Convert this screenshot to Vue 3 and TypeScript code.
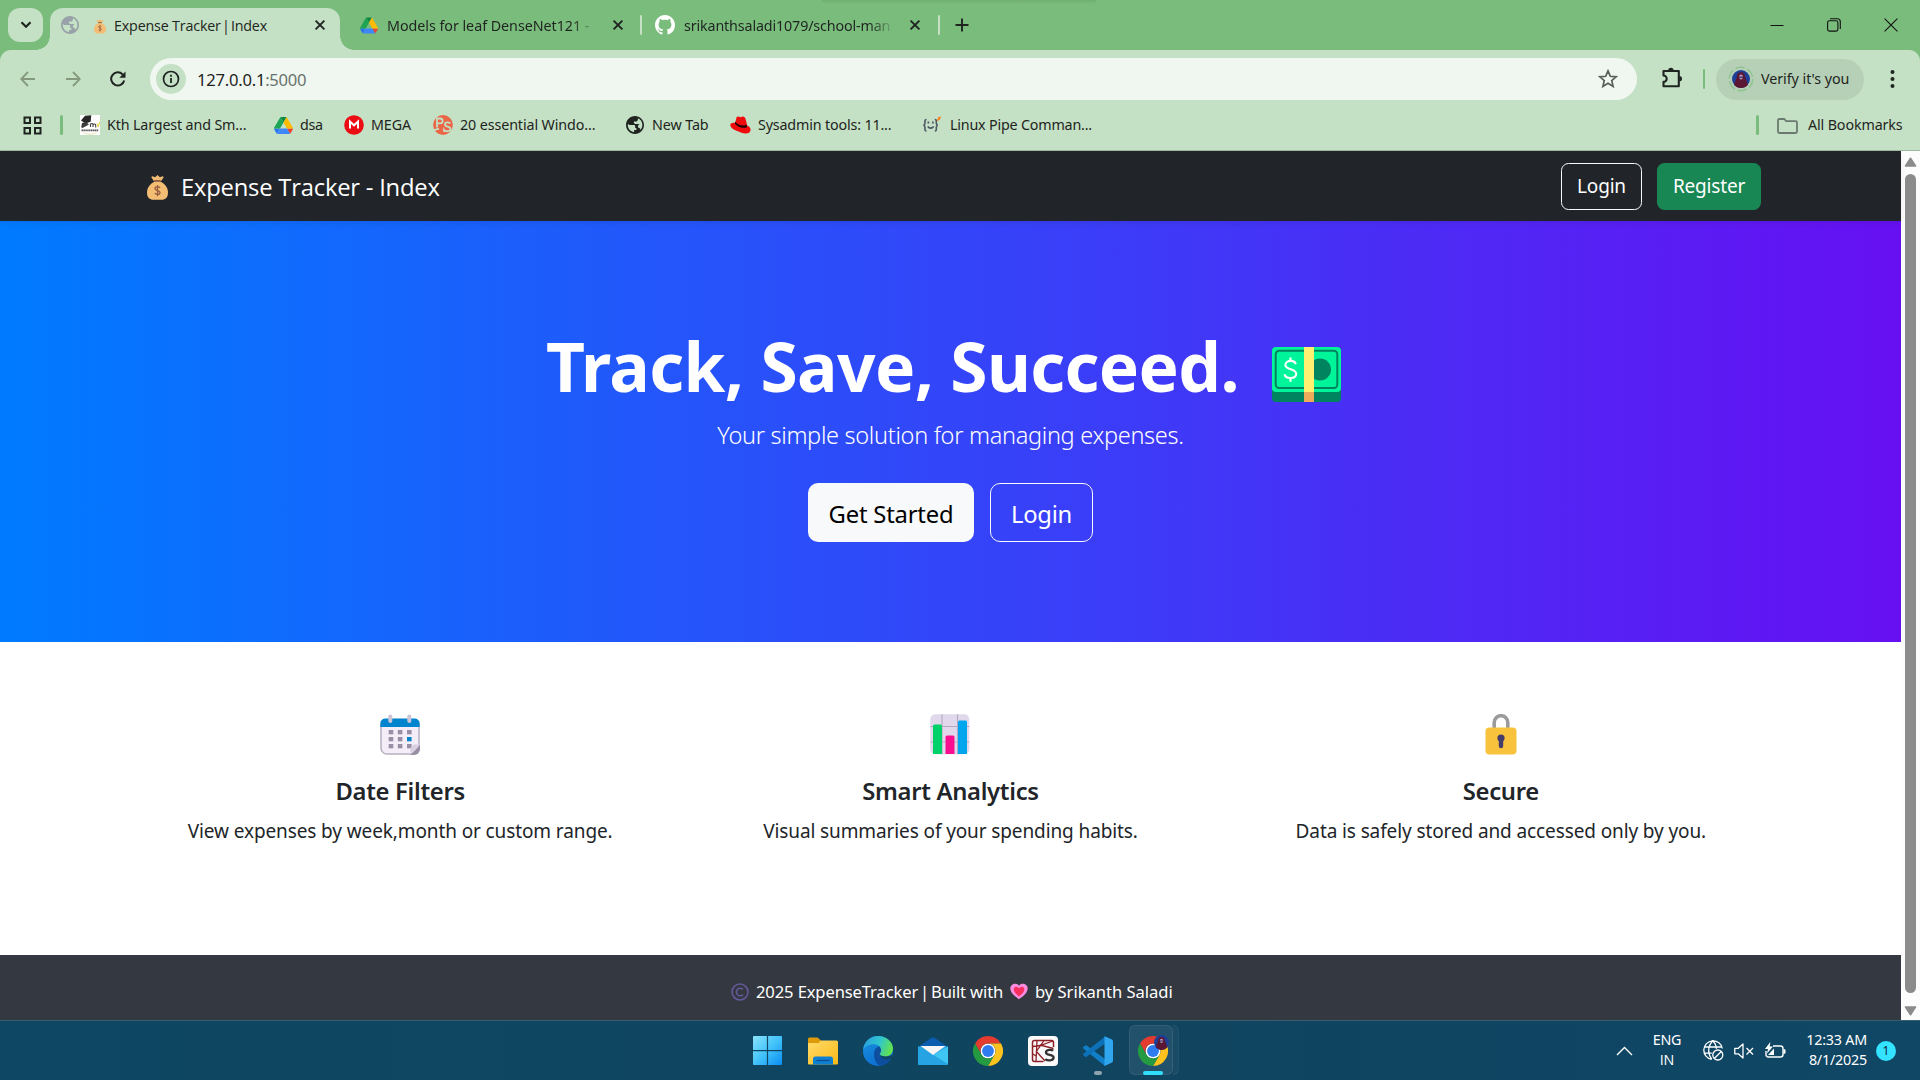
<script setup lang="ts">
interface Bookmark {
  icon: string
  label: string
  width: number
  spacing: number
}

interface Feature {
  icon: string
  title: string
  text: string
}

const bookmarks: Bookmark[] = [
  { icon: 'gate', label: 'Kth Largest and Sm...', width: 193, spacing: -0.15 },
  { icon: 'drive', label: 'dsa', width: 71, spacing: -0.3 },
  { icon: 'mega', label: 'MEGA', width: 89, spacing: -0.1 },
  { icon: 'ps', label: '20 essential Windo...', width: 192, spacing: -0.11 },
  { icon: 'globe', label: 'New Tab', width: 105, spacing: -0.1 },
  { icon: 'hat', label: 'Sysadmin tools: 11...', width: 192, spacing: -0.16 },
  { icon: 'braces', label: 'Linux Pipe Comman...', width: 175, spacing: -0.19 },
]

const features: Feature[] = [
  { icon: 'calendar', title: 'Date Filters', text: 'View expenses by week,month or custom range.' },
  { icon: 'chart', title: 'Smart Analytics', text: 'Visual summaries of your spending habits.' },
  { icon: 'lock', title: 'Secure', text: 'Data is safely stored and accessed only by you.' },
]
</script>

<template>
  <div class="screen">
    <!-- Shared symbols -->
    <svg class="defs" width="0" height="0" aria-hidden="true">
      <defs>
        <linearGradient id="win" x1="0" y1="0" x2="1" y2="1">
          <stop offset="0" stop-color="#8be3fb" /><stop offset=".5" stop-color="#43c3fa" /><stop offset="1" stop-color="#0a8df3" />
        </linearGradient>
        <linearGradient id="fold" x1="0" y1="0" x2="1" y2="1">
          <stop offset="0" stop-color="#ffdb6b" /><stop offset="1" stop-color="#fbb916" />
        </linearGradient>
        <linearGradient id="edgeTop" x1="0" y1=".3" x2="1" y2=".6">
          <stop offset="0" stop-color="#2a9fdc" /><stop offset=".5" stop-color="#2fc5cf" /><stop offset="1" stop-color="#66e445" />
        </linearGradient>
        <linearGradient id="edgeLow" x1="0" y1="0" x2=".6" y2="1">
          <stop offset="0" stop-color="#1a94e0" /><stop offset="1" stop-color="#0a6cd0" />
        </linearGradient>
      </defs>
      <symbol id="i-bag" viewBox="0 0 21 25">
        <path d="M5.500 1.200l2.600 1L10.500 0l2.400 2.200 2.600-1 1.300.8-2.600 4H6.800l-2.600-4z" fill="#f0bb73" />
        <path d="M7.200 5h6.600v2.300H7.200z" fill="#8a5a45" />
        <path d="M7.500 6.800h6c4.300 2 7.500 6 7.500 10.700 0 4.800-2.500 7.300-6.500 7.300h-8C2.500 24.800 0 22.300 0 17.500c0-4.700 3.200-8.700 7.500-10.700z" fill="#f3bd74" />
        <path d="M13 12.900c-.4-.9-1.300-1.300-2.500-1.300-1.600 0-2.500.8-2.500 1.900 0 2.700 5 1.400 5 4 0 1.200-1 2-2.500 2-1.300 0-2.200-.5-2.600-1.400M10.500 10.200v11" fill="none" stroke="#935c3e" stroke-width="1.300" />
      </symbol>
      <symbol id="i-drive" viewBox="0 0 87.3 78">
        <path d="m6.600 66.850 3.850 6.650c.8 1.400 1.950 2.500 3.300 3.300l13.750-23.800h-27.500c0 1.550.4 3.100 1.200 4.500z" fill="#2a73f0" />
        <path d="m43.650 25-13.750-23.800c-1.350.8-2.500 1.900-3.300 3.300l-25.400 44a9.060 9.060 0 0 0-1.200 4.500h27.500z" fill="#1ea455" />
        <path d="m73.550 76.800c1.350-.8 2.500-1.900 3.300-3.300l1.600-2.750 7.650-13.250c.8-1.400 1.200-2.950 1.200-4.500h-27.502l5.852 11.500z" fill="#ea4335" />
        <path d="m43.650 25 13.750-23.800c-1.350-.8-2.900-1.200-4.500-1.200h-18.500c-1.600 0-3.150.45-4.500 1.200z" fill="#118640" />
        <path d="m59.800 53h-32.300l-13.750 23.800c1.350.8 2.900 1.200 4.500 1.200h50.800c1.600 0 3.150-.45 4.500-1.200z" fill="#3f86f8" />
        <path d="m73.400 26.500-12.700-22c-.8-1.400-1.950-2.500-3.300-3.300l-13.750 23.800 16.150 28h27.450c0-1.550-.4-3.100-1.200-4.500z" fill="#fdbb05" />
      </symbol>
      <symbol id="i-globe" viewBox="2 2 20 20">
        <path d="M12 2C6.480 2 2 6.480 2 12s4.480 10 10 10 10-4.480 10-10S17.520 2 12 2zm-1 17.930c-3.950-.49-7-3.850-7-7.930 0-.4.100-.9.210-1.100L6 12h4.500c1.500 0 1.700.6 1.700 1.600v1.600h1.300v2.300H11v2.430zM17.900 17.390c-.5-.7-.2-1.600-1-2l-1.500-.5v-2.200l1.600-1.700h-5l-1.200-1.200V8.200h3l1.400-1.800V4.590c2.930 1.190 5 4.060 5 7.410 0 2.080-.8 3.970-2.300 5.390z" fill="currentColor" />
      </symbol>
      <symbol id="i-x" viewBox="0 0 12 12"><path d="M1.600 1.600l8.800 8.800M10.400 1.600l-8.800 8.800" stroke="#1f2421" stroke-width="1.900" /></symbol>
      <symbol id="i-chrome" viewBox="0 0 48 48">
        <circle cx="24" cy="24" r="12" fill="#fff" />
        <path d="M24 12h20.781a23.994 23.994 0 0 0-41.564.003L13.608 30l.009-.002A11.985 11.985 0 0 1 24 12z" fill="#e33b2e" />
        <path d="M34.391 30.003 24.001 48A23.994 23.994 0 0 0 44.780 12.003H23.999l-.003.009a11.985 11.985 0 0 1 10.395 17.991z" fill="#fcc31e" />
        <path d="M13.609 30.003 3.218 12.006A23.994 23.994 0 0 0 24.003 48l10.390-17.997-.007-.007a11.985 11.985 0 0 1-20.777.007z" fill="#249a41" />
        <circle cx="24" cy="24" r="9.500" fill="#2f7bf0" />
      </symbol>
      <symbol id="i-avatar" viewBox="0 0 20 20">
        <circle cx="10" cy="10" r="10" fill="#1f3f97" />
        <path d="M10 2.500c-3.200 0-4.600 2.300-4.600 5.200L2.300 16.400A10 10 0 0 0 10 20a10 10 0 0 0 7.700-3.600l-3.100-8.700c0-2.900-1.400-5.200-4.600-5.200z" fill="#5c1733" />
        <path d="M10 5c-1.500 0-2.200 1.200-2.200 2.600s.9 3 2.200 3 2.200-1.600 2.200-3S11.500 5 10 5z" fill="#b494ba" />
        <path d="M7.500 8h5" stroke="#27234d" stroke-width="1.200" />
      </symbol>
    </svg>

    <!-- Tab strip -->
    <header class="tabs">
      <div class="tab-search">
        <svg width="12" height="8" viewBox="0 0 12 8"><path d="M1.500 1.300L6 5.800l4.500-4.500" fill="none" stroke="#1f2421" stroke-width="2.200" /></svg>
      </div>
      <div class="tab active">
        <svg class="fav-globe" width="18" height="18"><use href="#i-globe" /></svg>
        <svg class="fav-bag" width="12" height="15"><use href="#i-bag" /></svg>
        <span class="tab-title tight">Expense Tracker <span class="pipe">|</span> Index</span>
        <svg class="x" width="12" height="12"><use href="#i-x" /></svg>
      </div>
      <div class="tab second">
        <svg class="fav-drive" width="18" height="17"><use href="#i-drive" /></svg>
        <span class="tab-title fade">Models for leaf DenseNet121 - </span>
        <svg class="x" width="12" height="12"><use href="#i-x" /></svg>
      </div>
      <i class="tab-sep"></i>
      <div class="tab third">
        <svg width="20" height="20" viewBox="0 0 16 16"><path fill="#fff" d="M8 0C3.580 0 0 3.580 0 8c0 3.540 2.290 6.530 5.470 7.590.4.070.55-.17.55-.38 0-.19-.01-.82-.01-1.490-2.010.37-2.530-.49-2.690-.94-.09-.23-.48-.94-.82-1.130-.28-.15-.68-.52-.01-.53.63-.01 1.080.58 1.230.82.72 1.210 1.870.87 2.330.66.07-.52.28-.87.51-1.070-1.780-.2-3.640-.89-3.640-3.950 0-.87.31-1.590.82-2.150-.08-.2-.36-1.020.08-2.120 0 0 .67-.21 2.200.82.64-.18 1.320-.27 2-.27s1.360.09 2 .27c1.530-1.040 2.200-.82 2.200-.82.44 1.100.16 1.920.08 2.120.51.56.82 1.270.82 2.150 0 3.070-1.870 3.750-3.650 3.950.29.25.54.73.54 1.480 0 1.070-.01 1.930-.01 2.200 0 .21.15.46.55.38A8.010 8.010 0 0 0 16 8c0-4.420-3.580-8-8-8" /></svg>
        <span class="tab-title fade">srikanthsaladi1079/school-man</span>
        <svg class="x" width="12" height="12"><use href="#i-x" /></svg>
      </div>
      <i class="tab-sep"></i>
      <svg class="plus" width="14" height="14" viewBox="0 0 14 14"><path d="M7 .5v13M.5 7h13" stroke="#1f2421" stroke-width="1.900" /></svg>
      <div class="window-controls">
        <svg width="14" height="14" viewBox="0 0 14 14"><path d="M.5 7.500h13" stroke="#111" /></svg>
        <svg width="14" height="14" viewBox="0 0 14 14" fill="none" stroke="#111"><rect x=".6" y="2.800" width="10.300" height="10.300" rx="1.800" stroke-width="1.100" /><path d="M3 .7h7.300a3 3 0 0 1 3 3V11" stroke-width="1.100" /></svg>
        <svg width="14" height="14" viewBox="0 0 14 14"><path d="M.6.600l12.800 12.800M13.400.600L.6 13.400" stroke="#111" stroke-width="1.100" /></svg>
      </div>
      <div class="top-shadow"></div>
    </header>

    <!-- Toolbar and bookmarks -->
    <div class="toolbar-bg">
      <div class="toolbar">
        <svg class="back" width="16" height="16" viewBox="0 0 16 16" fill="none" stroke="#85997f" stroke-width="1.800"><path d="M15 8H1.500M8 1L1.200 8 8 15" /></svg>
        <svg class="fwd" width="16" height="16" viewBox="0 0 16 16" fill="none" stroke="#85997f" stroke-width="1.800"><path d="M1 8h13.500M8 1l6.800 7L8 15" /></svg>
        <svg class="reload" width="16" height="16" viewBox="0 0 16 16"><path d="M14.200 9.500A6.600 6.600 0 1 1 12.600 3.400L14.500 5.400" fill="none" stroke="#1f2421" stroke-width="2" /><path d="M15.500.5v6.200H9.300z" fill="#1f2421" /></svg>
        <div class="address">
          <span class="site-info">
            <svg width="18" height="18" viewBox="0 0 18 18"><circle cx="9" cy="9" r="7.500" fill="none" stroke="#1f2421" stroke-width="1.700" /><path d="M9 8v5M9 4.800v1.900" stroke="#1f2421" stroke-width="1.800" /></svg>
          </span>
          <span class="url">127.0.0.1<span class="port">:5000</span></span>
          <svg class="star" width="20" height="20" viewBox="0 0 20 20"><path d="M10 1.900l2.300 5.400 5.900.5-4.450 3.850 1.350 5.750L10 14.300l-5.100 3.100 1.350-5.750L1.800 7.800l5.900-.5z" fill="none" stroke="#55605a" stroke-width="1.700" /></svg>
        </div>
        <svg class="puzzle" width="22" height="22" viewBox="0 0 22 22"><path d="M2.500 4h15.300v15.300H2.500v-4.400a3.200 3.200 0 0 0 0-6.400z" fill="none" stroke="#1f2421" stroke-width="2.100" stroke-linejoin="round" /><path d="M7.200 3.500a2.700 2.700 0 0 1 5.400 0zM18.300 9a2.700 2.700 0 0 1 0 5.400z" fill="#1f2421" /></svg>
        <i class="bar-sep thin"></i>
        <div class="profile">
          <span class="ring"><svg width="18" height="18"><use href="#i-avatar" /></svg>
            <svg class="dash" width="26" height="26" viewBox="0 0 26 26"><circle cx="13" cy="13" r="11.700" fill="none" stroke="#92c393" stroke-width="1.500" stroke-dasharray="9.500 2.750" /></svg>
          </span>
          <span class="small">Verify it's you</span>
        </div>
        <svg class="dots" width="5" height="20" viewBox="0 0 5 20" fill="#1f2421"><circle cx="2.500" cy="3" r="2" /><circle cx="2.500" cy="10" r="2" /><circle cx="2.500" cy="17" r="2" /></svg>
      </div>
      <div class="bookmarks">
        <svg class="apps" width="19" height="19" viewBox="0 0 19 19" fill="none" stroke="#1f2421" stroke-width="2"><rect x="1.500" y="1.500" width="5.500" height="5.500" /><rect x="12" y="1.500" width="5.500" height="5.500" /><rect x="1.500" y="12" width="5.500" height="5.500" /><rect x="12" y="12" width="5.500" height="5.500" /></svg>
        <i class="bar-sep"></i>
        <div v-for="b in bookmarks" :key="b.label" class="bookmark" :style="{ width: b.width + 'px' }">
          <svg v-if="b.icon === 'gate'" width="20" height="20" viewBox="0 0 20 20"><rect width="20" height="20" fill="#fff" /><path d="M1 5.500L5 .8l6.300-.6-.7 6.500L5.500 8.500z" fill="#272727" /><path d="M2 8l4-1 3 2.500L2.500 13l-1.300-.8z" fill="#3c3c3c" /><path d="M10.500 12V8.500m0 1c1-1.400 2.500-1.400 2.500.5v2m0-2c1-1.400 2.700-1.400 2.700.5v2" fill="none" stroke="#444" stroke-width="1.100" /><path d="M17 8.500l1.200 3.500 1.500-5" fill="none" stroke="#e3cd3c" /><path d="M1.500 15.300h17" stroke="#555" stroke-width="1.800" stroke-dasharray="1.500 .4" /><path d="M3.500 17.800c4 1.900 9 1.900 13 0" fill="none" stroke="#e9d9a0" stroke-width=".8" /></svg>
          <svg v-else-if="b.icon === 'drive'" class="shift" width="19" height="17"><use href="#i-drive" /></svg>
          <svg v-else-if="b.icon === 'mega'" width="20" height="20" viewBox="0 0 20 20"><circle cx="10" cy="10" r="9.800" fill="#ec0c14" /><path d="M6 13.500v-7l4 3.800 4-3.800v7" fill="none" stroke="#fff" stroke-width="2" /></svg>
          <svg v-else-if="b.icon === 'ps'" width="20" height="20" viewBox="0 0 20 20"><circle cx="10" cy="10" r="9.900" fill="#ea6647" /><g fill="none" stroke="#c4e1c5" stroke-width="1.800"><path d="M4 12.500V3.500h3.200a2.400 2.400 0 0 1 0 4.800H4" /><path d="M17.300 8.500c-.7-1.400-5.300-1.700-5.300.9 0 2.700 5.600 1.700 5.600 4.600 0 2.900-5.400 2.700-6.500.9L11.100 17M0 15.500l6-1.800" /></g></svg>
          <svg v-else-if="b.icon === 'globe'" class="dark" width="18" height="18"><use href="#i-globe" /></svg>
          <svg v-else-if="b.icon === 'hat'" width="21" height="19" viewBox="0 0 21 19"><path d="M5.200 7L6.500 1.400C7 .4 8 .3 9 .8c1 .5 2 .4 3-.1 1.500-.6 3.200.6 3.600 2.200l1.600 6.500c2 .9 3.600 2.300 3.400 4.600-.4 3.800-5.300 4.200-9.700 2.500C6 14.800.4 12.500.3 9 .3 6.900 3 6.400 5.200 7z" fill="#f00c0c" /><path d="M4.800 7.300c2 3.500 8 5.500 12.200 3.900l-.4-2.400c-3.400 1.700-9.500.2-11.300-3.400z" fill="#1c0505" /></svg>
          <svg v-else width="21" height="20" viewBox="0 0 21 20"><g fill="none" stroke="#4b5666" stroke-width="1.600"><path d="M4.500 4.500C2.500 4.500 3 6 3 8c0 1.500-.6 2-1.600 2.200 1 .2 1.600.7 1.600 2.200 0 2-.4 3.600 1.500 3.600M12.800 4.500c2 0 1.500 1.500 1.500 3.500 0 1.500.4 2 1.400 2.200-1 .2-1.400.7-1.400 2.200 0 2 .4 3.600-1.500 3.600M5.800 11.300c1.200 2.400 4.600 2.400 5.800 0" /></g><path d="M5.500 6.500h1.700v2H5.500zM10 6.500h1.700v2H10z" fill="#4b5666" /><path d="M14.500 6.500l2-4.500 2.500-.5-1 3z" fill="#fa7f16" /></svg>
          <span class="small" :style="{ letterSpacing: b.spacing + 'px' }">{{ b.label }}</span>
        </div>
        <div class="all-bookmarks">
          <i class="bar-sep"></i>
          <svg width="21" height="16" viewBox="0 0 21 16"><path d="M1 2.500C1 1.600 1.500 1 2.400 1h4.800l2 2.200h9.400c.8 0 1.400.6 1.400 1.400v8.900c0 .9-.6 1.500-1.400 1.500H2.400c-.9 0-1.400-.6-1.400-1.500z" fill="none" stroke="#6b7a70" stroke-width="1.800" /></svg>
          <span class="small">All Bookmarks</span>
        </div>
      </div>
    </div>

    <!-- Web page -->
    <div class="viewport">
      <div class="page">
        <nav class="navbar">
          <svg width="21" height="25"><use href="#i-bag" /></svg>
          <span class="brand">Expense Tracker - Index</span>
          <button class="btn outline">Login</button>
          <button class="btn success">Register</button>
        </nav>

        <section class="hero">
          <div class="headline">
            <h1>Track, Save, Succeed.</h1>
            <svg width="69" height="55" viewBox="0 0 69 55">
              <rect width="69" height="55" rx="4" fill="#00835f" />
              <rect width="69" height="45" rx="4" fill="#00f59b" />
              <rect x="3.700" y="3.700" width="61.600" height="37.300" rx="3.500" fill="none" stroke="#00835f" stroke-width="2" />
              <circle cx="48" cy="22.500" r="11" fill="#00835f" />
              <rect x="32" width="10" height="45" fill="#fff071" />
              <rect x="32" y="45" width="10" height="10" fill="#f0ab5a" />
              <path d="M23.800 17.300c-.6-2.200-2.500-3.400-5.200-3.400-3 0-5.200 1.600-5.200 4 0 5.200 10.800 3.400 10.800 8.900 0 2.600-2.400 4.200-5.700 4.200-3.200 0-5.400-1.400-5.900-3.800M18.500 10.500v3.500M18.500 31v3.700" fill="none" stroke="#fff" stroke-width="2.100" />
            </svg>
          </div>
          <p class="lead">Your simple solution for managing expenses.</p>
          <div class="cta">
            <button class="btn big light">Get Started</button>
            <button class="btn big outline">Login</button>
          </div>
        </section>

        <section class="features">
          <article v-for="f in features" :key="f.title">
            <svg v-if="f.icon === 'calendar'" width="40" height="41" viewBox="0 0 40 41">
              <rect x="1" y="6" width="38" height="34" rx="6" fill="#f3eef8" stroke="#b8b0c2" stroke-width="1.500" />
              <path d="M.3 13V9.500a5 5 0 0 1 5-5h29.400a5 5 0 0 1 5 5V13z" fill="#0084ce" />
              <rect x="8.300" y=".5" width="4" height="8.500" rx="2" fill="#cdc4d6" /><rect x="27.300" y=".5" width="4" height="8.500" rx="2" fill="#cdc4d6" />
              <g fill="#998ea4"><rect x="8.700" y="16" width="4.600" height="4.300" /><rect x="17.800" y="16" width="4.600" height="4.300" /><rect x="27" y="16" width="4.600" height="4.300" /><rect x="8.700" y="23" width="4.600" height="4.300" /><rect x="17.800" y="23" width="4.600" height="4.300" /><rect x="8.700" y="30" width="4.600" height="4.300" /><rect x="17.800" y="30" width="4.600" height="4.300" /><rect x="27" y="30" width="4.600" height="4.300" /></g>
              <rect x="27" y="23" width="4.600" height="4.300" fill="#0084ce" />
              <path d="M40 30.500h-4.500a5 5 0 0 0-5 5V40z" fill="#d9cfe2" /><path d="M40 31v4a6 6 0 0 1-6 6h-3.700z" fill="#998ea4" />
            </svg>
            <svg v-else-if="f.icon === 'chart'" width="40" height="41" viewBox="0 0 40 41">
              <rect x=".3" y=".3" width="39" height="40" rx="5" fill="#e1d8ec" />
              <path d="M12 .3v40M27.500.3v40M.3 12.500h39M.3 28h39" stroke="#b5aabf" stroke-width="1.100" />
              <path d="M3 40V12a1.500 1.500 0 0 1 1.500-1.500h6A1.500 1.500 0 0 1 12 12v28z" fill="#00d26a" />
              <path d="M15.500 40V23a1.500 1.500 0 0 1 1.500-1.500h6a1.500 1.500 0 0 1 1.500 1.500v17z" fill="#fb0d8f" />
              <path d="M28 40V8a1.500 1.500 0 0 1 1.500-1.500h6A1.500 1.500 0 0 1 37 8v32z" fill="#00a6ed" />
            </svg>
            <svg v-else width="40" height="41" viewBox="0 0 40 41">
              <path d="M13.200 15V8.500a6.800 6.800 0 0 1 13.600 0V15" fill="none" stroke="#9b9b9b" stroke-width="3.600" />
              <rect x="4.500" y="13.500" width="31" height="27" rx="4" fill="#f9c23c" />
              <circle cx="20" cy="24" r="3.600" fill="#433b6b" /><path d="M20 25v7" stroke="#433b6b" stroke-width="4.400" stroke-linecap="round" />
            </svg>
            <h2>{{ f.title }}</h2>
            <p>{{ f.text }}</p>
          </article>
        </section>

        <footer class="foot">
          <svg class="copy" width="18" height="18" viewBox="0 0 18 18" fill="none" stroke="#65589a" stroke-width="1.600"><circle cx="9" cy="9" r="8" /><path d="M12 6.400A3.800 3.800 0 1 0 12 11.600" /></svg>
          <span class="foot-a">2025 ExpenseTracker <span class="pipe">|</span> Built with</span>
          <svg class="heart" width="18" height="17" viewBox="0 0 18 17"><path d="M9 16.300C6 14 .3 10.500.3 5.300.3 1 6.500-1 9 2.800 11.500-1 17.700 1 17.700 5.300 17.700 10.500 12 14 9 16.300z" fill="#fa8de0" /><path d="M9 13.400c-2-1.500-5.300-4.200-5.300-7.200C3.700 3.400 7.300 2.800 9 5.500c1.700-2.700 5.300-2.100 5.300.7 0 3-3.300 5.700-5.300 7.200z" fill="#f92f60" /></svg>
          <span class="foot-b">by Srikanth Saladi</span>
        </footer>
      </div>
      <div class="scrollbar">
        <svg width="13" height="10" viewBox="0 0 13 10"><path d="M6.500 1.300L11.500 9h-10z" fill="#8b8b8b" stroke="#8b8b8b" stroke-width="1.600" stroke-linejoin="round" /></svg>
        <div class="thumb"></div>
        <svg width="13" height="10" viewBox="0 0 13 10"><path d="M6.500 8.700L11.500 1h-10z" fill="#8b8b8b" stroke="#8b8b8b" stroke-width="1.600" stroke-linejoin="round" /></svg>
      </div>
    </div>

    <!-- Taskbar -->
    <div class="taskbar">
      <div class="apps-row">
        <span class="app"><svg width="29" height="29" viewBox="0 0 29 29" fill="url(#win)"><path d="M1 0h12.900v14H0V1a1 1 0 0 1 1-1zM15.100 0H28a1 1 0 0 1 1 1v13H15.100zM0 15.200h13.900V29H1a1 1 0 0 1-1-1zM15.100 15.200H29V28a1 1 0 0 1-1 1H15.100z" /></svg></span>
        <span class="app"><svg width="30" height="28" viewBox="0 0 30 28"><path d="M0 2A1.500 1.500 0 0 1 1.500.500h8L13 3.500V8H0z" fill="#dd9a0a" /><path d="M0 6h10.500L13 3.500h15.500A1.500 1.500 0 0 1 30 5v21.500a1 1 0 0 1-1 1H1a1 1 0 0 1-1-1z" fill="url(#fold)" /><path d="M5 27.500V22a2.500 2.500 0 0 1 2.500-2.500h15A2.500 2.500 0 0 1 25 22v5.500z" fill="#0f7fd0" /><path d="M8.500 23.500h13" stroke="#0a4c95" stroke-width="1.200" /></svg></span>
        <span class="app"><svg width="30" height="30" viewBox="0 0 30 30"><circle cx="15" cy="15" r="15" fill="url(#edgeLow)" /><path d="M11 18c0-5 3-7.500 6-7.500l3 8.500 9 1.500C27 26.500 21.500 30 16.500 29.500 12.500 27 11 22.500 11 18z" fill="#0d4f9e" /><path d="M0 14C1 5.500 7.500 0 15 0c8.500 0 15 6 15 12.500 0 5-3.500 8-8 8-3.500 0-5.300-1.200-5.300-2.300 0-.8 1.400-1.500 1.400-4 0-3.300-3-5.900-7.100-5.900C5.500 8.300 1.500 11 0 14z" fill="url(#edgeTop)" /><path d="M17.300 18.500c1.500 2.500 8 3.300 11.500.2l1.200.8v2l-3 1.300c-5 1.700-9.500-.8-9.700-4.300z" fill="#0f4661" /></svg></span>
        <span class="app"><svg width="30" height="28" viewBox="0 0 30 28"><path d="M0 10L13.500.8a2.600 2.600 0 0 1 3 0L30 10l-15 9z" fill="#0b5cae" /><path d="M0 9.500h30V27a1 1 0 0 1-1 1H1a1 1 0 0 1-1-1z" fill="#26a3e2" /><path d="M15 18L30 9.500V27z" fill="#3fc6f5" /><path d="M15 18.500L0 28h29.500z" fill="#2db0e8" /><path d="M15 18L29.500 28H1a1 1 0 0 1-1-1V9.500z" fill="#26a3e2" /><path d="M2.500 9h25L15 18z" fill="#f5f5f5" /></svg></span>
        <span class="app"><svg width="30" height="30"><use href="#i-chrome" /></svg></span>
        <span class="app"><svg width="30" height="30" viewBox="0 0 30 30"><rect width="30" height="30" rx="4" fill="#fafafa" /><path d="M15.500 25.500H6.500a2 2 0 0 1-2-2v-17a2 2 0 0 1 2-2h17a2 2 0 0 1 2 2V11" fill="none" stroke="#8f1f26" stroke-width="1.500" /><path d="M9 4.500l-1 21M5 10.500l7-1 13-4.500M8 16l8-11.500M8 15l9 10M12 9l13.500 3.500M8 20l-3-2" fill="none" stroke="#8f1f26" stroke-width="1.300" /><path d="M25.200 14.800c-1.500-1.500-7.200-1.500-7.200 1.600 0 3.600 7.600 1.400 7.600 5.200 0 3.400-6.300 3.300-8.300 1.500" fill="none" stroke="#333" stroke-width="2.300" /></svg></span>
        <span class="app"><svg width="30" height="30" viewBox="0 0 30 30"><path d="M0 11.500l2-2a1.200 1.200 0 0 1 1.600 0L22 23v7L.3 12.600a.8.8 0 0 1-.3-1.100z" fill="#1180c9" /><path d="M0 18.800l2 2a1.200 1.200 0 0 0 1.600 0L22 7.500V.500L.3 17.700a.8.800 0 0 0-.3 1.100z" fill="#0c71b8" /><path d="M21.500.200L29 3.600a1.800 1.800 0 0 1 1 1.600v19.600a1.800 1.800 0 0 1-1 1.600l-7.500 3.500z" fill="#2fa6ee" /></svg><i class="run"></i></span>
        <span class="app current"><i class="behind"></i><i class="tile"></i><svg width="30" height="30"><use href="#i-chrome" /></svg><svg class="mini" width="15" height="15"><use href="#i-avatar" /></svg><i class="run on"></i></span>
      </div>
      <div class="tray">
        <svg class="chev" width="17" height="10" viewBox="0 0 17 10"><path d="M1 9l7.500-7.500L16 9" fill="none" stroke="#fff" stroke-width="1.400" /></svg>
        <div class="lang"><span>ENG</span><span class="plain">IN</span></div>
        <svg class="net" width="21" height="21" viewBox="0 0 21 21" fill="none" stroke="#fff" stroke-width="1.300"><path d="M19.300 8.500A9.300 9.300 0 1 0 8.800 19.300M1.300 7h17.500M1.300 13.200h7.500M9.800.7C4.500 6 4.500 14 8.800 19.300M9.800.7c2.400 2.300 3.400 5 3.700 8" /><circle cx="14.800" cy="15" r="5" /><path d="M11.300 18.500l7-7" /></svg>
        <svg class="vol" width="20" height="16" viewBox="0 0 20 16" fill="none" stroke="#fff" stroke-width="1.300"><path d="M.8 5.300h3.500L9 1v14l-4.700-4.200H.8z" stroke-linejoin="round" /><path d="M12.500 5l6.500 6.500M19 5l-6.500 6.500" /></svg>
        <svg class="bat" width="21" height="17" viewBox="0 0 21 17"><path d="M8 4h7.500a2.500 2.500 0 0 1 2.500 2.500v6a2.500 2.500 0 0 1-2.500 2.500H3.300A2.300 2.300 0 0 1 1 12.700V9" fill="none" stroke="#fff" stroke-width="1.400" /><path d="M18.500 7.300h.8c.8 0 1.200.4 1.200 1v2.500c0 .6-.4 1-1.200 1h-.8z" fill="#fff" /><path d="M5.300 0L0 7h3l-1 4.500L8 4.500H4.800zM3 13h6V6.500z" fill="#fff" /></svg>
        <div class="clock"><span>12:33 AM</span><span>8/1/2025</span></div>
        <span class="badge">1</span>
      </div>
    </div>
  </div>
</template>

<style>
body {
  margin: 0;
}
</style>

<style scoped>
.screen {
  width: 1920px;
  height: 1080px;
  overflow: hidden;
  display: flex;
  flex-direction: column;
  background: #7abc7c;
  font-family: "Noto Sans", "Open Sans", sans-serif;
  color: #212529;
  white-space: nowrap;
}
.screen * {
  box-sizing: border-box;
}
.screen svg {
  display: block;
  flex: none;
}
.screen .defs {
  position: absolute;
}

/* tab strip */
.tabs {
  height: 50px;
  flex: none;
  display: flex;
  align-items: center;
  padding-left: 8px;
  position: relative;
}
.tab-search {
  width: 35px;
  height: 34px;
  border-radius: 12px;
  background: #c4e1c5;
  display: flex;
  align-items: center;
  justify-content: center;
  margin-right: 7px;
}
.tab {
  display: flex;
  align-items: center;
  height: 34px;
}
.tab.active {
  width: 290px;
  height: 42px;
  align-self: flex-end;
  background: #c4e1c5;
  border-radius: 13px 13px 0 0;
  padding: 0 14px 8px 11px;
  position: relative;
}
.tab.active::before,
.tab.active::after {
  content: "";
  position: absolute;
  bottom: 0;
  width: 14px;
  height: 14px;
}
.tab.active::before {
  left: -14px;
  background: radial-gradient(circle at 0 0, transparent 13.5px, #c4e1c5 14px);
}
.tab.active::after {
  right: -14px;
  background: radial-gradient(circle at 100% 0, transparent 13.5px, #c4e1c5 14px);
}
.fav-globe {
  color: #98a2a8;
}
.fav-bag {
  margin: 2px 8px 0 15px;
}
.tab-title {
  font-size: 14.3px;
  line-height: 20px;
  padding-top: 1px;
  color: #1f2421;
  flex: 1;
  min-width: 0;
}
.tab-title.tight {
  font-family: "Open Sans", sans-serif;
  letter-spacing: -0.18px;
}
.pipe {
  margin: 0 -2.3px;
}
.tab-title.fade {
  letter-spacing: -0.14px;
  -webkit-mask-image: linear-gradient(to right, #000 calc(100% - 26px), transparent);
  mask-image: linear-gradient(to right, #000 calc(100% - 26px), transparent);
}
.tab.second {
  width: 264px;
  margin: 0 19px 0 20px;
}
.second .tab-title {
  margin: 0 15px 0 9px;
}
.second .tab-title.fade {
  letter-spacing: -0.04px;
}
.tab.third {
  width: 266px;
  margin: 0 20px 0 13px;
}
.third .tab-title {
  margin: 0 14px 0 9px;
}
.tab-sep {
  width: 2px;
  height: 20px;
  border-radius: 1px;
  background: #c4e1c5;
  margin-left: -3px;
}
.plus {
  margin-left: 15px;
}
.window-controls {
  margin-left: auto;
  display: flex;
  gap: 43px;
  padding-right: 22px;
}
.top-shadow {
  position: absolute;
  left: 822px;
  top: 0;
  width: 274px;
  height: 4px;
  background: linear-gradient(rgba(50, 100, 50, 0.16), transparent);
  border-radius: 0 0 20px 20px;
}

/* toolbar */
.toolbar-bg {
  height: 101px;
  flex: none;
  background: #c4e1c5;
  border-radius: 11px 11px 0 0;
  border-bottom: 1px solid #9db89e;
}
.toolbar {
  display: flex;
  align-items: center;
  height: 42px;
  margin-top: 8px;
  padding-left: 20px;
}
.fwd {
  margin-left: 29px;
}
.reload {
  margin: 0 24px 0 29px;
}
.address {
  width: 1487px;
  height: 42px;
  border-radius: 21px;
  background: #f0f7f0;
  display: flex;
  align-items: center;
  padding: 0 19px 0 6px;
}
.site-info {
  width: 30px;
  height: 30px;
  border-radius: 50%;
  background: #c4e1c5;
  display: flex;
  align-items: center;
  justify-content: center;
}
.url {
  margin-left: 11px;
  font-size: 16.6px;
  line-height: 24px;
  padding-top: 1px;
  letter-spacing: -0.24px;
  color: #1f2421;
  flex: 1;
}
.port {
  color: #68736c;
}
.puzzle {
  margin-left: 24px;
  margin-top: -2px;
}
.bar-sep {
  width: 3px;
  height: 20px;
  border-radius: 1.5px;
  background: #7abc7c;
  flex: none;
}
.bar-sep.thin {
  width: 2px;
  margin: 0 11px 0 20px;
}
.profile {
  width: 148px;
  height: 41px;
  border-radius: 21px;
  background: #b5d0b6;
  display: flex;
  align-items: center;
}
.ring {
  position: relative;
  width: 26px;
  height: 26px;
  margin: 0 7px 0 12px;
  display: flex;
  align-items: center;
  justify-content: center;
}
.dash {
  position: absolute;
  inset: 0;
}
.dots {
  margin-left: 26px;
}
.small {
  font-size: 14.3px;
  line-height: 20px;
  letter-spacing: -0.05px;
  color: #1f2421;
}
.bookmarks {
  display: flex;
  align-items: center;
  height: 20px;
  margin-top: 15px;
  padding-left: 23px;
}
.apps {
  margin-right: 18px;
}
.bookmark {
  display: flex;
  align-items: center;
  flex: none;
}
.bar-sep + .bookmark {
  margin-left: 17px;
}
.bookmark svg {
  margin-right: 7px;
}
.bookmark .shift {
  margin-left: 1px;
}
.bookmark .dark {
  margin-left: 1px;
  margin-right: 8px;
  color: #1f2421;
}
.all-bookmarks {
  margin-left: auto;
  padding-right: 17px;
  display: flex;
  align-items: center;
}
.all-bookmarks svg {
  margin: 1px 10px 0 18px;
}
.all-bookmarks .small {
  width: 95px;
  letter-spacing: -0.13px;
}

/* page */
.viewport {
  height: 869px;
  flex: none;
  display: flex;
}
.page {
  width: 1901px;
  height: 869px;
  background: #fff;
  display: flex;
  flex-direction: column;
}
.navbar {
  height: 70px;
  flex: none;
  background: #212529;
  display: flex;
  align-items: center;
  padding: 0 140px 0 147px;
  position: relative;
  box-shadow: 0 2.5px 5px rgba(0, 0, 0, 0.075);
}
.navbar svg {
  margin-top: 3px;
}
.brand {
  margin: 0 auto 0 13px;
  padding-top: 1px;
  font-family: "Open Sans", sans-serif;
  font-size: 23.8px;
  letter-spacing: -0.22px;
  color: #fff;
}
.btn {
  font-family: inherit;
  font-size: 19px;
  line-height: 30px;
  height: 47px;
  padding: 0;
  border: 1.25px solid transparent;
  border-radius: 7.5px;
  color: #fff;
  background: transparent;
  letter-spacing: -0.18px;
}
.btn.outline {
  border-color: #f8f9fa;
}
.navbar .outline {
  width: 81px;
  margin-right: 15px;
}
.btn.success {
  width: 104px;
  background: #198754;
}
.hero {
  height: 421px;
  flex: none;
  background: linear-gradient(to right, #007bff, #6610f2);
  color: #fff;
}
.headline {
  display: flex;
  padding: 101px 0 0 546px;
}
h1 {
  margin: 0;
  width: 726px;
  font-size: 67.6px;
  line-height: 88px;
  letter-spacing: -0.6px;
  font-weight: 700;
}
.headline svg {
  margin-top: 25px;
}
.lead {
  margin: 6px 0 0;
  text-align: center;
  font-size: 23.5px;
  line-height: 38px;
  font-weight: 300;
  letter-spacing: -0.3px;
}
.cta {
  display: flex;
  justify-content: center;
  gap: 16px;
  margin-top: 29px;
}
.btn.big {
  height: 59px;
  border-radius: 10px;
  font-size: 23.8px;
  width: 103px;
  padding-top: 2px;
  letter-spacing: -0.3px;
}
.btn.big.light {
  width: 166px;
  background: #f8f9fa;
  color: #000;
  letter-spacing: -0.2px;
}
.features {
  height: 313px;
  flex: none;
  padding: 72px 125px 0;
  display: flex;
}
article {
  width: 551px;
  display: flex;
  flex-direction: column;
  align-items: center;
}
h2 {
  margin: 20px 0 0;
  font-size: 23.8px;
  line-height: 32px;
  font-weight: 600;
  letter-spacing: -0.3px;
}
article p {
  margin: 9px 0 0;
  font-size: 19px;
  line-height: 30px;
  letter-spacing: -0.11px;
}
.foot {
  height: 65px;
  flex: none;
  background: #343840;
  color: #fff;
  display: flex;
  align-items: center;
  padding: 8px 0 0 731px;
  font-size: 16.6px;
  line-height: 24px;
}
.foot-a {
  margin: 0 0 0 7px;
  width: 246px;
  letter-spacing: -0.13px;
}
.heart {
  margin: 0 7px 0 8px;
}
.foot-b {
  letter-spacing: -0.04px;
}
.scrollbar {
  width: 19px;
  background: #fcfcfc;
  display: flex;
  flex-direction: column;
  align-items: center;
  padding: 6px 0 4px;
}
.thumb {
  width: 11px;
  flex: 1;
  margin: 7px 0 13px;
  border-radius: 5.5px;
  background: #8b8b8b;
}

/* taskbar */
.taskbar {
  height: 60px;
  flex: none;
  background: linear-gradient(to right, #0e4763, #10445f 60%, #0f4765);
  border-top: 1px solid #37606f;
  display: flex;
  align-items: center;
  padding-left: 740px;
}
.apps-row {
  display: flex;
}
.app {
  width: 55.1px;
  height: 59px;
  display: flex;
  align-items: center;
  justify-content: center;
  position: relative;
}
.tile,
.behind {
  position: absolute;
  left: 3px;
  top: 4px;
  width: 44px;
  height: 50px;
  border-radius: 6px;
  background: rgba(255, 255, 255, 0.08);
  border: 1px solid rgba(255, 255, 255, 0.07);
}
.behind {
  left: 9px;
  background: rgba(255, 255, 255, 0.04);
  clip-path: inset(0 0 0 38px);
}
.current svg {
  position: relative;
}
.current .mini {
  position: absolute;
  left: 28px;
  top: 14px;
}
.run {
  position: absolute;
  bottom: 5px;
  left: 23.5px;
  width: 8px;
  height: 4px;
  border-radius: 2px;
  background: #8fa3ae;
}
.run.on {
  left: 17.5px;
  width: 20px;
  background: #30dffc;
}
.tray {
  margin-left: auto;
  display: flex;
  align-items: center;
  padding-right: 24px;
  color: #fff;
  font-size: 14.3px;
  line-height: 20px;
}
.lang,
.clock {
  display: flex;
  flex-direction: column;
  margin-top: -2px;
}
.lang {
  width: 30px;
  margin: -2px 21px 0 19px;
  align-items: center;
  letter-spacing: -0.2px;
}
.plain {
  font-family: "Open Sans", sans-serif;
}
.vol {
  margin: 0 11px 0 10px;
}
.clock {
  width: 81px;
  align-items: flex-end;
  letter-spacing: -0.2px;
}
.badge {
  width: 20px;
  height: 20px;
  margin-left: 9px;
  border-radius: 50%;
  background: #33e3ff;
  color: #0b2a38;
  font-size: 12px;
  line-height: 19px;
  text-align: center;
}
</style>
